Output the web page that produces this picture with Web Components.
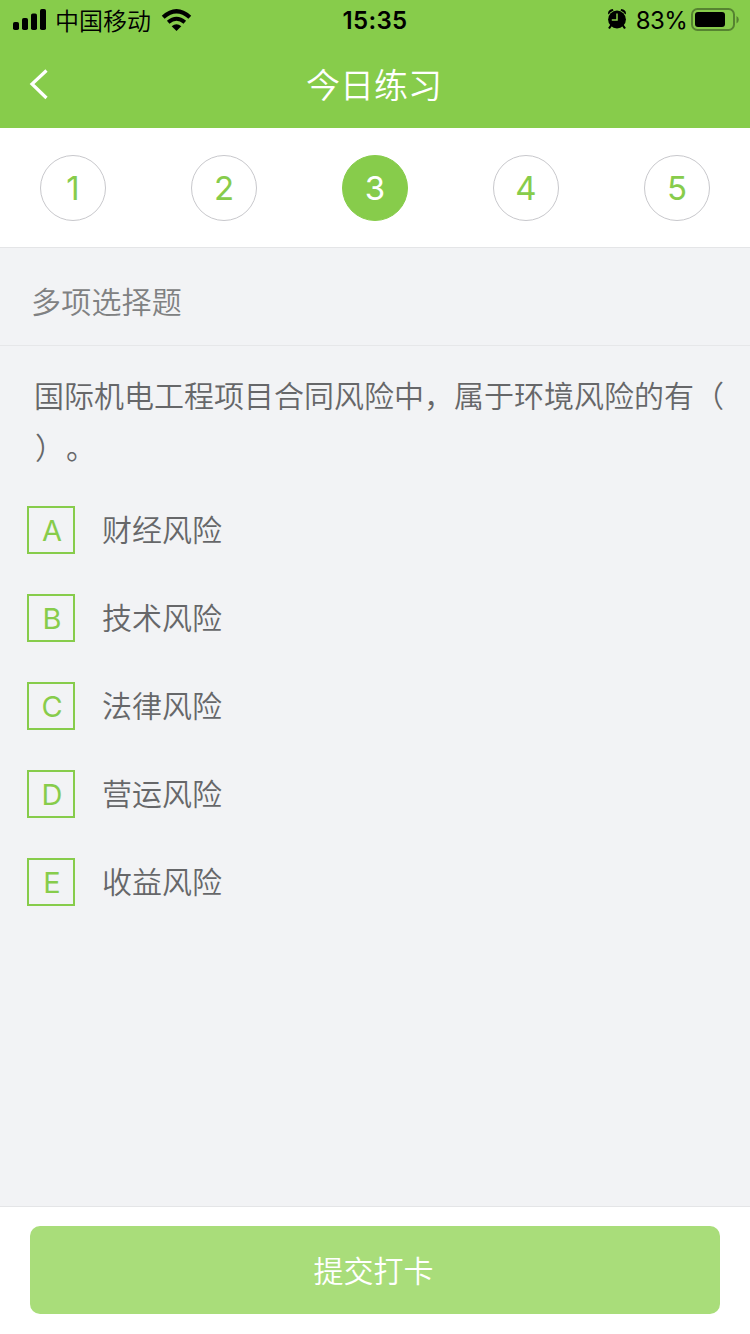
<!DOCTYPE html>
<html lang="zh-CN">
<head>
<meta charset="utf-8">
<title>今日练习</title>
<style>
  body { margin: 0; font-family: "Noto Sans CJK SC", sans-serif; font-weight: 350; text-spacing-trim: space-all; --green: #87cc4b; }
</style>
</head>
<body>
<practice-app></practice-app>
<script>
const define = (name, html) => {
  const template = document.createElement('template');
  template.innerHTML = html;
  customElements.define(name, class extends HTMLElement {
    constructor() {
      super();
      this.attachShadow({ mode: 'open' }).append(template.content.cloneNode(true));
    }
  });
};

define('status-bar', `
<style>
  :host { display: grid; grid-template-columns: 1fr auto 1fr; align-items: center; height: 40px; padding: 0 11px 0 12px; color: #000; font-size: 24px; line-height: 40px; white-space: nowrap; }
  .left, .right { display: flex; align-items: center; height: 40px; }
  .right { justify-content: flex-end; }
  svg { display: block; flex: none; }
  .carrier { margin: 0 10px 0 8px; line-height: 38px; }
  .time, .pct { font-family: Inter, sans-serif; line-height: 38px; padding-top: 2px; }
  .time { font-weight: 600; letter-spacing: .35px; padding-right: 1px; }
  .pct { font-size: 24px; font-weight: 400; margin: 0 4px 0 9px; letter-spacing: -.7px; }
</style>
<div class="left">
  <svg width="35" height="40" viewBox="0 0 35 40"><rect x="1" y="22" width="6" height="8" rx="1.8"/><rect x="10" y="18" width="6" height="12" rx="1.8"/><rect x="19" y="13.500" width="6" height="16.500" rx="1.800"/><rect x="28" y="9" width="6" height="21" rx="1.800"/></svg>
  <span class="carrier">中国移动</span>
  <svg width="32" height="40" viewBox="0 0 32 40"><g fill="none" stroke="#000"><path d="M2.200 17.300Q15.500 5.200 28.800 17.300" stroke-width="4.200"/><path d="M7.200 22.300Q15.500 15.100 23.800 22.300" stroke-width="3.900"/></g><path d="M10.700 26.200Q15.500 22.200 20.300 26.200L15.500 31Z"/></svg>
</div>
<span class="time">15:35</span>
<div class="right">
  <svg width="20" height="40" viewBox="0 0 20 40"><circle cx="10" cy="19.500" r="8.900"/><path d="M4.700 24.500L2 28.500M15.300 24.500L18 28.500" stroke="#000" stroke-width="2.200"/><path d="M1 13.500Q1 9.500 5.800 9L6.500 10.500Q3 12 1.600 14.500Z M19 13.500Q19 9.500 14.200 9L13.500 10.500Q17 12 18.400 14.500Z"/><path d="M10 13.500V20H4.800" fill="none" stroke="#87cc4b" stroke-width="1.500"/></svg>
  <span class="pct">83%</span>
  <svg width="48" height="40" viewBox="0 0 48 40"><rect x="1" y="9" width="42" height="21" rx="5.500" fill="none" stroke="#568331" stroke-width="2"/><rect x="4" y="12" width="30" height="15" rx="3"/><path d="M45.500 16Q47.800 17.200 47.800 19.700T45.500 23.400Z" fill="#568331"/></svg>
</div>`);

define('nav-bar', `
<style>
  :host { display: grid; grid-template-columns: 60px 1fr 60px; align-items: center; height: 88px; color: #fff; }
  svg { display: block; margin-left: 28px; }
  .title { text-align: center; font-size: 34px; line-height: 87px; height: 88px; padding-right: 2px; }
</style>
<svg width="22" height="34" viewBox="0 0 22 34"><path d="M18.500 3.500L4 17L18.500 31" fill="none" stroke="#fff" stroke-width="3.200"/></svg>
<span class="title"><slot></slot></span>`);

define('step-dot', `
<style>
  :host { display: block; box-sizing: border-box; width: 66px; height: 66px; border: 1px solid #c8c8cc; border-radius: 50%; text-align: center; font: 400 33px/65px Inter, sans-serif; color: var(--green); }
  :host([current]) { background: var(--green); border-color: var(--green); color: #fff; }
</style><slot></slot>`);

define('step-list', `
<style>
  :host { display: flex; justify-content: space-between; align-items: center; box-sizing: border-box; height: 120px; padding: 0 40px; background: #fff; border-bottom: 1px solid #e4e5e7; }
</style><slot></slot>`);

define('question-type', `
<style>
  :host { display: block; box-sizing: border-box; height: 98px; padding: 2px 31px 0; border-bottom: 1px solid #e6e7e9; font-size: 30px; letter-spacing: .2px; line-height: 101px; color: #808182; }
</style><slot></slot>`);

define('question-text', `
<style>
  :host { display: block; padding: 22px 0 0 34px; font-size: 30px; line-height: 52px; color: #666769; white-space: nowrap; }
  .tail { letter-spacing: 1px; padding-left: 1px; }
</style><slot></slot><br><span class="tail"><slot name="tail"></slot></span>`);

define('answer-option', `
<style>
  :host { display: flex; align-items: center; gap: 27px; height: 48px; color: #666769; font-size: 30px; }
  .key { box-sizing: border-box; width: 48px; height: 48px; border: 2px solid var(--green); color: var(--green); text-align: center; font: 400 29px/46px Inter, sans-serif; padding-left: 2px; }
  .label { line-height: 44px; height: 48px; }
</style>
<span class="key"><slot name="key"></slot></span><span class="label"><slot></slot></span>`);

define('answer-list', `
<style>
  :host { display: flex; flex-direction: column; gap: 40px; padding: 34px 27px 0; }
</style><slot></slot>`);

define('submit-bar', `
<style>
  :host { display: block; box-sizing: border-box; height: 128px; padding: 19px 30px 20px; background: #fff; border-top: 1px solid #e4e5e7; }
  button { display: block; width: 100%; height: 88px; border: 0; border-radius: 10px; padding: 0 3px 2px 0; background: #a9dd7a; color: #fff; font: 350 30px/86px "Noto Sans CJK SC", sans-serif; }
</style><button><slot></slot></button>`);

define('practice-app', `
<style>
  :host { display: flex; flex-direction: column; width: 750px; height: 1334px; overflow: hidden; background: #f2f3f5; }
  header { background: var(--green); flex: none; }
  main { flex: 1; }
</style>
<header><status-bar></status-bar><nav-bar>今日练习</nav-bar></header>
<step-list><step-dot>1</step-dot><step-dot>2</step-dot><step-dot current>3</step-dot><step-dot>4</step-dot><step-dot>5</step-dot></step-list>
<main>
  <question-type>多项选择题</question-type>
  <question-text>国际机电工程项目合同风险中，属于环境风险的有（<span slot="tail">）。</span></question-text>
  <answer-list>
    <answer-option><span slot="key">A</span>财经风险</answer-option>
    <answer-option><span slot="key">B</span>技术风险</answer-option>
    <answer-option><span slot="key">C</span>法律风险</answer-option>
    <answer-option><span slot="key">D</span>营运风险</answer-option>
    <answer-option><span slot="key">E</span>收益风险</answer-option>
  </answer-list>
</main>
<submit-bar>提交打卡</submit-bar>`);
</script>
</body>
</html>
